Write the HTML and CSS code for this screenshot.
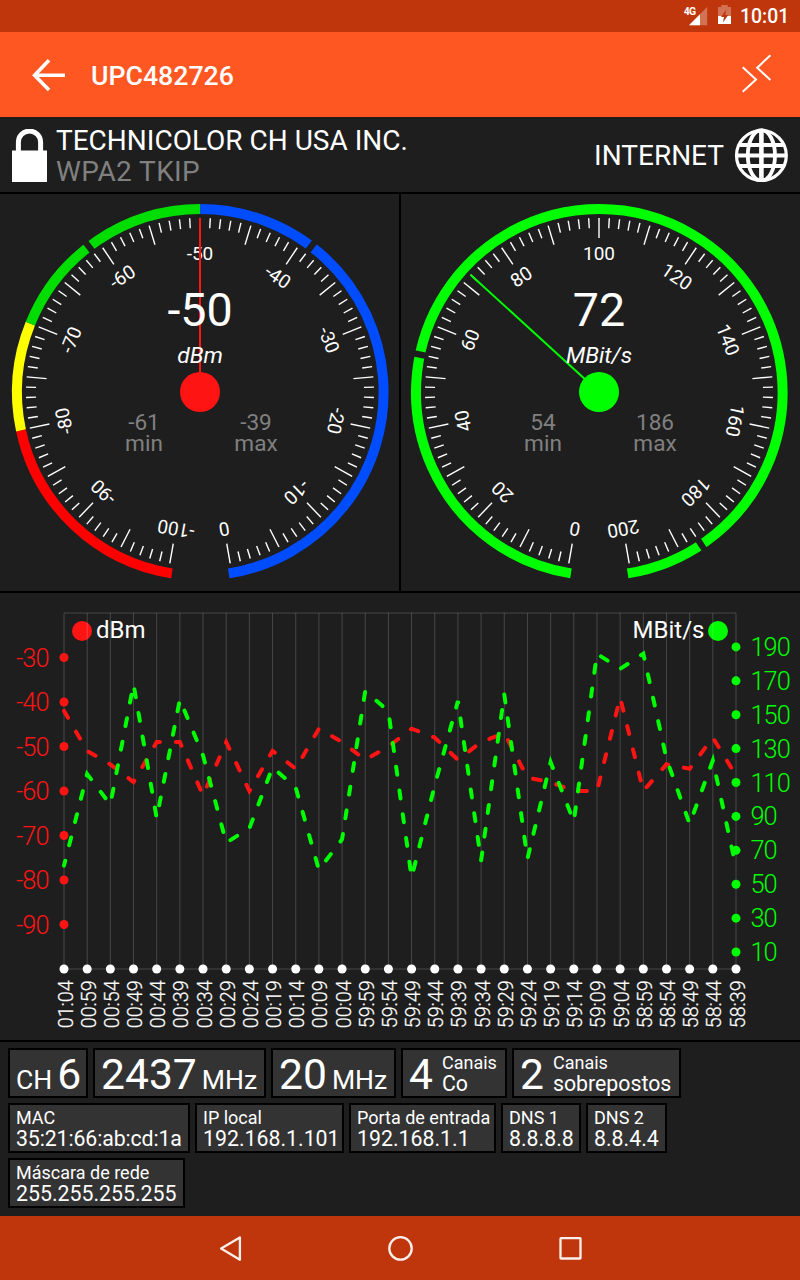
FILE: index.html
```html
<!DOCTYPE html>
<html lang="pt">
<head>
<meta charset="utf-8">
<title>UPC482726</title>
<link rel="stylesheet" href="styles.css">
</head>
<body>
<div class="screen">
  <div class="status">
    <svg class="signal" width="26" height="32" viewBox="684 0 26 32">
      <text class="net" x="683.8" y="15.2">4G</text>
      <path d="M707.2 7V25.2H689z" fill="#fff" fill-opacity=".3"/>
      <path d="M700 14.2V25.2H689z" fill="#fff"/>
    </svg>
    <svg class="battery" width="14" height="32" viewBox="718 0 14 32">
      <path d="M721.3 5h6.4v2h3.3v9h-13V7h3.3z" fill="#fff" fill-opacity=".3"/>
      <path d="M718 16h13v8h-13z" fill="#fff"/>
      <path d="M726.3 9.5l-5.3 7.5h3l-1 5.5 5.2-7.5h-3z" fill="#bf360c"/>
    </svg>
    <span class="clock">10:01</span>
  </div>
  <div class="appbar">
    <svg width="34" height="34" viewBox="32 58 34 34" fill="none" stroke="#fff" stroke-width="3.6"><path d="M65 75.2H35M49 60.2L34.6 75.2L49 90"/></svg>
    <h1>UPC482726</h1>
    <svg width="32" height="42" viewBox="741 53 32 42" fill="none" stroke="#fff" stroke-width="2"><path d="M742.7 67.3L756 79.6L742.7 91.7M770.4 55.3L757.2 67.7L770.4 80"/></svg>
  </div>
  <div class="header">
    <svg width="35" height="53" viewBox="12 129 35 53"><path d="M18.4 152V142.2a11.1 11.1 0 0 1 22.2 0V152" fill="none" stroke="#fff" stroke-width="5"/><path d="M12 150.6h35V182H12z" fill="#fff"/></svg>
    <div class="vendor"><div>TECHNICOLOR CH USA INC.</div><div class="sec">WPA2 TKIP</div></div>
    <div class="inet">INTERNET</div>
    <svg width="54" height="54" viewBox="-27.4 -27.4 54 54" fill="none" stroke="#fff"><circle r="24.9" stroke-width="3.2"/><ellipse rx="13.6" ry="25.3" stroke-width="3.8"/><path d="M0-25V25" stroke-width="4.6"/><path d="M-25 0H25" stroke-width="4"/><path d="M-23-10.4H23M-23 10.6H23" stroke-width="3.8"/></svg>
  </div>
  <div class="gauges">
    <svg id="g1" class="gauge" width="399" height="397" viewBox="0 194 399 397"></svg>
    <svg id="g2" class="gauge" width="399" height="397" viewBox="401 194 399 397"></svg>
  </div>
  <svg id="chart" class="chart" width="800" height="447" viewBox="0 593 800 447"></svg>
  <div class="info">
    <div class="row">
      <div class="chip w80"><span class="mid">CH</span><span class="big gap">6</span></div>
      <div class="chip w174"><span class="big">2437</span><span class="mid gap">MHz</span></div>
      <div class="chip w125"><span class="big">20</span><span class="mid gap">MHz</span></div>
      <div class="chip w106 count"><span class="big">4</span><div class="two"><div class="lab">Canais</div><div class="val">Co</div></div></div>
      <div class="chip w169 count"><span class="big">2</span><div class="two"><div class="lab">Canais</div><div class="val">sobrepostos</div></div></div>
    </div>
    <div class="row">
      <div class="chip stack w182"><div class="lab">MAC</div><div class="val mac">35:21:66:ab:cd:1a</div></div>
      <div class="chip stack w149"><div class="lab">IP local</div><div class="val">192.168.1.101</div></div>
      <div class="chip stack w147"><div class="lab">Porta de entrada</div><div class="val">192.168.1.1</div></div>
      <div class="chip stack w80"><div class="lab">DNS 1</div><div class="val">8.8.8.8</div></div>
      <div class="chip stack w81"><div class="lab">DNS 2</div><div class="val">8.8.4.4</div></div>
    </div>
    <div class="row">
      <div class="chip stack w177"><div class="lab">Máscara de rede</div><div class="val">255.255.255.255</div></div>
    </div>
  </div>
  <div class="nav">
    <svg width="26" height="28" viewBox="218.3 1234 26 28"><path d="M221.4 1248.6L240.2 1237.4V1259.8z"/></svg>
    <svg width="26" height="28" viewBox="388 1234 26 28"><circle cx="400.5" cy="1248.4" r="11.2"/></svg>
    <svg width="26" height="28" viewBox="558 1234 26 28"><rect x="560.5" y="1238.2" width="20" height="20.3" rx=".5"/></svg>
  </div>
</div>
<script src="app.js"></script>
</body>
</html>
```
FILE: styles.css
```css
* { box-sizing: border-box; }
body { margin: 0; background: #1e1e1e; color: #fff; font-family: Roboto, sans-serif; }
svg { display: block; flex: none; }
.screen { width: 800px; height: 1280px; display: flex; flex-direction: column; overflow: hidden; }
.status { height: 32px; background: #bf360c; display: flex; justify-content: flex-end; padding-right: 11px; }
.battery { margin-left: 8px; }
.clock { margin-left: 8px; font-size: 19.4px; font-weight: 500; line-height: 33px; width: 49px; white-space: nowrap; }
.net { font-size: 10.4px; font-weight: 700; fill: #fff; letter-spacing: -.7px; }
.appbar { height: 85px; background: #ff5722; display: flex; align-items: center; padding: 0 27px 0 32px; }
.appbar h1 { margin: 0 auto 0 25px; font-size: 26.7px; font-weight: 500; line-height: 32px; padding-top: 2px; }
.appbar svg:last-child { margin-top: -1px; }
.header { height: 77px; border-bottom: 2px solid #000; display: flex; align-items: center; padding: 1px 12px 0; font-size: 28px; white-space: nowrap; }
.vendor { margin-left: 9px; line-height: 31px; padding-top: 1px; }
.sec { color: #808080; letter-spacing: .4px; }
.inet { margin: 0 10px 0 auto; line-height: 31px; }
.gauges { height: 399px; display: flex; gap: 2px; background: #000; border-bottom: 2px solid #000; }
.gauge { background: #1e1e1e; }
.gauge text { fill: #fff; text-anchor: middle; }
.gauge .num { font-size: 19px; }
.gauge .value { font-size: 46.6px; }
.gauge .unit { font-size: 22.8px; font-style: italic; }
.gauge .side { font-size: 22.6px; fill: #808080; }
.tick { stroke: #fff; stroke-width: 1.4; }
.axis { font-size: 25.4px; font-weight: 300; letter-spacing: -1px; }
.legend { font-size: 24px; fill: #fff; }
.time { font-size: 20.4px; font-weight: 300; fill: #fff; stroke: #fff; stroke-width: .25; }
.grid { stroke: #fff; stroke-opacity: .18; fill: none; }
.line { fill: none; stroke-width: 4; stroke-dasharray: 7.99 15.97; stroke-linecap: round; stroke-miterlimit: 4; }
.info { height: 176px; border-top: 2px solid #000; padding: 6px 8px; display: flex; flex-direction: column; gap: 5px; }
.row { display: flex; gap: 5px; }
.chip { height: 50px; border: 2px solid #000; background: #333; padding: 0 6px; display: flex; align-items: baseline; white-space: nowrap; line-height: 48px; }
.big { font-size: 42.6px; }
.mid { font-size: 26.6px; }
.gap { margin-left: 5px; }
.stack { display: block; padding-top: 2px; }
.lab { font-size: 18px; line-height: 21px; height: 20px; }
.val { font-size: 21.3px; line-height: 23px; height: 23px; }
.mac { letter-spacing: -.12px; }
.count { align-items: flex-start; }
.two { margin-left: 9px; padding-top: 2px; }
.w80 { width: 80px; } .w81 { width: 81px; } .w106 { width: 106px; } .w125 { width: 125px; }
.w147 { width: 147px; } .w149 { width: 149px; } .w169 { width: 169px; } .w174 { width: 173px; }
.w177 { width: 177px; } .w182 { width: 182px; }
.nav { height: 64px; background: #bf360c; display: flex; align-items: center; padding-left: 218px; gap: 144px; }
.nav svg { fill: none; stroke: #fff; stroke-opacity: .92; stroke-width: 2.3; stroke-linejoin: round; }
```
FILE: app.js
```js
const rad = d => d * Math.PI / 180;

// Angles are measured clockwise from the top of the dial.
function arc(cx, cy, r, a, b, color) {
  const p = d => (cx + r * Math.sin(rad(d))).toFixed(2) + ' ' + (cy - r * Math.cos(rad(d))).toFixed(2);
  return `<path d="M${p(a)}A${r} ${r} 0 ${b - a > 180 ? 1 : 0} 1 ${p(b)}" fill="none" stroke="${color}" stroke-width="10"/>`;
}

function gauge(id, o) {
  const { cx, cy, rx } = o;
  const ang = v => (v - o.min) / (o.max - o.min) * 340 - 170;
  let s = '';
  o.arcs.forEach(([a, b, c]) => { s += arc(rx, cy + .3, 183.3, a, b, c); });
  [o.low, o.high].forEach(v => {
    s += `<path d="M${cx - 3.1} ${cy - 190}h6.2v13.4h-6.2z" fill="#1e1e1e" transform="rotate(${ang(v)} ${cx} ${cy})"/>`;
  });
  for (let i = 0; i <= 100; i++) {
    s += `<path class="tick" d="M${cx} ${cy - 174}v${i % 5 ? 10 : 20}" transform="rotate(${i * 3.4 - 170} ${cx} ${cy})"/>`;
  }
  for (let i = 0; i <= 10; i++) {
    const v = o.min + (o.max - o.min) * i / 10;
    s += `<text class="num" x="${cx}" y="${cy - 132.4}" transform="rotate(${i * 34 - 170} ${cx} ${cy})">${v}</text>`;
  }
  s += `<path d="M${cx} ${cy}V${cy - 174}" stroke="${o.color}" stroke-width="2" transform="rotate(${ang(o.value)} ${cx} ${cy})"/>`;
  s += `<circle cx="${cx}" cy="${cy}" r="20" fill="${o.color}"/>`;
  s += `<text class="value" x="${cx}" y="${cy - 66}">${o.value}</text><text class="unit" x="${cx}" y="${cy - 29.3}">${o.unit}</text>`;
  s += `<text class="side" x="${cx - 56}" y="${cy + 38}">${o.low}</text><text class="side" x="${cx - 56}" y="${cy + 59}">min</text>`;
  s += `<text class="side" x="${cx + 56}" y="${cy + 38}">${o.high}</text><text class="side" x="${cx + 56}" y="${cy + 59}">max</text>`;
  document.getElementById(id).innerHTML = s;
}

gauge('g1', { cx: 200, rx: 200.3, cy: 392, min: -100, max: 0, value: -50, low: -61, high: -39, unit: 'dBm', color: '#ff1414',
  arcs: [[-171.1, -102, '#ff0000'], [-102, -68, '#ffff00'], [-68, 0, '#00dd00'], [0, 171.1, '#004cff']] });
gauge('g2', { cx: 599, rx: 599.3, cy: 392, min: 0, max: 200, value: 72, low: 54, high: 186, unit: 'MBit/s', color: '#00ff00',
  arcs: [[-171.1, 171.1, '#00ff00']] });

const red = [-42, -51, -54, -58, -49, -49, -61, -49, -60, -51, -55, -46, -49, -53, -50, -46, -48, -53, -49, -47, -57, -58, -60, -60, -39, -60, -54, -55, -48, -56.5];
const green = [61, 115, 97, 168, 89, 159, 126, 74.5, 83, 119, 107, 58.5, 76.5, 164, 152, 54, 108.4, 158, 64, 162, 65, 122, 87, 186, 177, 186, 124, 85.5, 123, 60];
const times = '01:04 00:59 00:54 00:49 00:44 00:39 00:34 00:29 00:24 00:19 00:14 00:09 00:04 59:59 59:54 59:49 59:44 59:39 59:34 59:29 59:24 59:19 59:14 59:09 59:04 58:59 58:54 58:49 58:44 58:39'.split(' ');
const X = i => 64 + i * 672 / 29;
const yr = v => 613 + (-20 - v) * 4.45;
const yg = v => 969 - v * 356 / 210;
let s = `<circle cx="82" cy="631" r="10" fill="#ff1414"/><text class="legend" x="96" y="638">dBm</text>
<circle cx="718" cy="631" r="10" fill="#00ff00"/><text class="legend" x="704.5" y="638" text-anchor="end">MBit/s</text>`;
s += '<path class="grid" d="M64 613H736M64 969H736' + times.map((t, i) => `M${X(i)} 613V969`).join('') + '"/>';
const line = (d, y, c, off) => `<path class="line" stroke="${c}" stroke-dashoffset="${off}" d="M${d.map((v, i) => X(i).toFixed(2) + ' ' + y(v).toFixed(2)).join('L')}"/>`;
s += '<clipPath id="plot"><path d="M62 613H736V969H62z"/></clipPath><g clip-path="url(#plot)">' + line(red, yr, '#ff1414', 0) + line(green, yg, '#00ff00', 3) + '</g>';
for (let v = -30; v >= -90; v -= 10) {
  s += `<circle cx="64" cy="${yr(v)}" r="4.5" fill="#ff1414"/><text class="axis" x="48.5" y="${yr(v) + 9}" text-anchor="end" fill="#ff1414">${v}</text>`;
}
for (let v = 10; v <= 190; v += 20) {
  s += `<circle cx="736" cy="${yg(v)}" r="4.5" fill="#00ff00"/><text class="axis" x="750.5" y="${yg(v) + 9}" fill="#00ff00">${v}</text>`;
}
times.forEach((t, i) => {
  s += `<circle cx="${X(i)}" cy="969" r="4.5" fill="#fff"/><text class="time" textLength="48" lengthAdjust="spacingAndGlyphs" transform="translate(${X(i) + 8.5} 1028.3) rotate(-90)">${t}</text>`;
});
document.getElementById('chart').innerHTML = s;
```
